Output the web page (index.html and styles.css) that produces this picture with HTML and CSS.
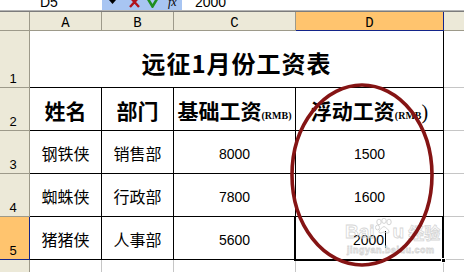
FILE: index.html
```html
<!DOCTYPE html>
<html lang="zh">
<head>
<meta charset="utf-8">
<title>远征1月份工资表</title>
<link rel="stylesheet" href="styles.css">
</head>
<body>
<div class="app">
  <div class="fbar">
    <div class="namebox"><span class="ftxt">D5</span></div>
    <div class="tools">
      <svg class="drop" width="7" height="4" viewBox="0 0 7 4"><path d="M0 0H7L3.5 4Z" fill="#000"/></svg>
      <svg class="xic" width="11" height="8" viewBox="0 0 11 8"><path d="M1 -3L10 7M10 -3L1 7" stroke="#B0121B" stroke-width="2.4" fill="none"/></svg>
      <svg class="okic" width="11" height="8" viewBox="0 0 11 8"><path d="M1 -1L5.5 6.5L10 -1" stroke="#1F8F1F" stroke-width="2.6" fill="none"/></svg>
      <span class="fx">fx</span>
    </div>
    <div class="val"><span class="ftxt">2000</span></div>
  </div>
  <div class="sep"></div>
  <div class="sheet">
    <div class="corner"></div>
    <div class="ch">A</div>
    <div class="ch">B</div>
    <div class="ch">C</div>
    <div class="ch ch-sel">D</div>
    <div class="ch ch-last"></div>

    <div class="rh">1</div>
    <div class="c title">远征1月份工资表</div>
    <div class="e"></div>

    <div class="rh">2</div>
    <div class="c hd"><span>姓名</span></div>
    <div class="c hd"><span>部门</span></div>
    <div class="c hd"><span>基础工资<small>(RMB)</small></span></div>
    <div class="c hd"><span>浮动工资<small>(RMB</small><span class="bigp">)</span></span></div>
    <div class="e"></div>

    <div class="rh">3</div>
    <div class="c tx">钢铁侠</div>
    <div class="c tx">销售部</div>
    <div class="c num">8000</div>
    <div class="c num">1500</div>
    <div class="e"></div>

    <div class="rh">4</div>
    <div class="c tx">蜘蛛侠</div>
    <div class="c tx">行政部</div>
    <div class="c num">7800</div>
    <div class="c num">1600</div>
    <div class="e"></div>

    <div class="rh rh-sel">5</div>
    <div class="c tx">猪猪侠</div>
    <div class="c tx">人事部</div>
    <div class="c num">5600</div>
    <div class="c num d5">2000<span class="caret"></span><span class="handle"></span></div>
    <div class="e"></div>

    <div class="rh rh-last"></div>
    <div class="g"></div>
    <div class="g"></div>
    <div class="g"></div>
    <div class="g"></div>
    <div class="g g-last"></div>
  </div>

  <div class="watermark">
    <div class="wm-top"><span>Bai</span><svg class="paw" width="18" height="17" viewBox="0 0 18 17"><g fill="none" stroke="#d4d4d4" stroke-width="1"><ellipse cx="4" cy="4" rx="2.2" ry="2.8"/><ellipse cx="9" cy="2.8" rx="2.2" ry="2.6"/><ellipse cx="14" cy="4" rx="2.2" ry="2.8"/><ellipse cx="2.5" cy="9.5" rx="2" ry="2.4"/><path d="M5 15C3 15 4 11 9 8.5C14 11 15 15 13 15C11 15 10 14 9 14C8 14 7 15 5 15Z"/></g></svg><span>u</span><span class="wm-cn">经验</span></div>
    <div class="wm-url">jingyan.baidu.com</div>
  </div>

  <svg class="ring" width="144" height="184" viewBox="0 0 144 184"><ellipse cx="72" cy="92" rx="70" ry="90" fill="none" stroke="#851414" stroke-width="3.6"/></svg>
</div>
</body>
</html>
```
FILE: styles.css
```css
* { box-sizing: border-box; }
html, body { margin: 0; padding: 0; background: #fff; overflow: hidden; }
body { font-family: "Liberation Sans", Arial, sans-serif; color: #000; }

.app {
  position: relative;
  width: 464px;
  height: 272px;
  overflow: hidden;
  display: flex;
  flex-direction: column;
}

/* formula bar (cut at the top) */
.fbar {
  flex: none;
  height: 10px;
  display: flex;
  overflow: hidden;
}
.namebox { width: 102px; height: 10px; background: #fff; padding-left: 40px; }
.val { flex: 1; height: 10px; background: #fff; padding-left: 13px; }
.ftxt { display: block; font-size: 14px; line-height: 14px; margin-top: -5px; }
.tools {
  width: 80px;
  height: 10px;
  background: #A8C5F2;
  display: flex;
  align-items: flex-start;
}
.drop { margin-left: 7px; display: block; }
.xic { margin-left: 13px; display: block; }
.okic { margin-left: 7px; display: block; }
.fx {
  margin-left: 10px;
  font-family: "Liberation Serif", serif;
  font-style: italic;
  font-size: 12px;
  line-height: 10px;
  margin-top: -3px;
}
.sep { flex: none; height: 2px; border-top: 1px solid #b4b4b4; border-bottom: 1px solid #7c7c7c; }

/* sheet grid */
.sheet {
  flex: 1;
  display: grid;
  grid-template-columns: 30px 72px 72px 122px 148px 1fr;
  grid-template-rows: 19px 57px 43px 43px 43px 43px 1fr;
}
.sheet > div {
  display: flex;
  align-items: center;
  justify-content: center;
  min-width: 0;
  white-space: nowrap;
}

.corner, .ch, .rh {
  background: #ECE9D8;
  border-right: 1px solid #9D9A8A;
  border-bottom: 1px solid #9D9A8A;
}
.ch {
  font-family: "Liberation Mono", monospace;
  font-size: 14px;
  padding-top: 3px;
}
.ch-sel { background: #FFC46E; border-right-color: #13248A; border-bottom-color: #13248A; }
.ch-last { border-right: none; }

.sheet > .rh {
  align-items: flex-end;
  font-size: 13px;
  padding-bottom: 1px;
  padding-right: 3px;
}
.rh-sel { background: #FFC46E; border-right-color: #13248A; border-bottom-color: #13248A; }
.rh-last { border-bottom: none; }

.c { border-right: 1px solid #000; border-bottom: 1px solid #000; }
.e { border-bottom: 1px solid #C6C6C6; }
.g { border-right: 1px solid #C6C6C6; }
.g-last { border-right: none; }

.title {
  grid-column: 2 / 6;
  font-family: "Noto Sans CJK SC", sans-serif;
  font-weight: 700;
  font-size: 24px;
  letter-spacing: 1px;
  padding-top: 6px;
}
.hd {
  font-family: "Noto Sans CJK SC", sans-serif;
  font-weight: 700;
  font-size: 21px;
  padding-top: 2px;
}
.hd small {
  font-family: "Liberation Serif", serif;
  font-weight: 700;
  font-size: 10px;
}
.bigp { font-family: "Liberation Serif", serif; font-weight: 400; font-size: 20px; }

.tx {
  font-family: "Noto Sans CJK SC", sans-serif;
  font-size: 16px;
  padding-top: 2px;
}
.num {
  font-size: 14px;
  padding-top: 3px;
}

.d5 { position: relative; }
.d5::after {
  content: "";
  position: absolute;
  left: -2px;
  top: -1px;
  right: -1px;
  bottom: -2px;
  border: 2px solid #000;
  border-top-width: 1px;
  pointer-events: none;
}
.caret { display: inline-block; width: 1px; height: 17px; background: #000; margin-left: 1px; }
.handle {
  position: absolute;
  right: -3px;
  bottom: -4px;
  width: 5px;
  height: 5px;
  background: #000;
  border: 1px solid #fff;
  z-index: 2;
}

/* faint watermark */
.watermark {
  position: absolute;
  left: 345px;
  top: 218px;
  color: transparent;
  -webkit-text-stroke: 0.8px #d6d6d6;
  pointer-events: none;
}
.wm-top { display: flex; align-items: flex-end; font-size: 19px; font-weight: 700; line-height: 22px; }
.paw { display: block; margin: 0 0 8px 0; }
.wm-cn { font-family: "Noto Sans CJK SC", sans-serif; font-size: 16px; margin-left: 4px; }
.wm-url { font-size: 9px; font-weight: 700; line-height: 10px; margin-top: 2px; padding-left: 2px; letter-spacing: 0.5px; }

.ring { position: absolute; left: 290px; top: 83px; }
```
